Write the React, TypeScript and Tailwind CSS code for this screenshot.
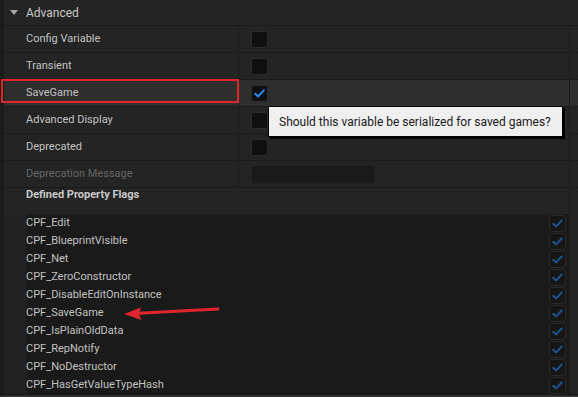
import React from "react";

const font = { fontFamily: "Roboto, 'Liberation Sans', sans-serif" };

const Check = ({ color }: { color: string }) => (
  <svg width="11" height="9" viewBox="0 0 11 9" fill="none">
    <path d="M1.2 4.8 L4.1 7.4 L9.8 1.4" stroke={color} strokeWidth="2" strokeLinecap="round" strokeLinejoin="round" />
  </svg>
);

const Box = ({ checked, dim }: { checked?: boolean; dim?: boolean }) => (
  <div className="w-[17px] h-[17px] rounded-[3px] bg-[#0f0f0f] border border-[#2c2c2c] flex items-center justify-center">
    {checked && <Check color={dim ? "#1f5a9e" : "#2a8cff"} />}
  </div>
);

const Row = ({
  label,
  children,
  highlight,
  muted,
}: {
  label: string;
  children?: React.ReactNode;
  highlight?: boolean;
  muted?: boolean;
}) => (
  <div className={`flex h-[27px] border-b border-[#1b1b1b] ${highlight ? "bg-[#2e2e2e]" : "bg-[#242424]"}`}>
    <div className="w-[4px] bg-[#1c1c1c]" />
    <div className={`w-[234px] pl-[22px] flex items-center text-[11px] ${muted ? "text-[#676767]" : "text-[#c2c2c2]"}`}>
      {label}
    </div>
    <div className="w-px bg-[#1b1b1b]" />
    <div className="flex-1 pl-[12px] flex items-center">{children}</div>
    <div className="w-px bg-[#1b1b1b]" />
    <div className="w-[8px]" />
  </div>
);

const flags = [
  "CPF_Edit",
  "CPF_BlueprintVisible",
  "CPF_Net",
  "CPF_ZeroConstructor",
  "CPF_DisableEditOnInstance",
  "CPF_SaveGame",
  "CPF_IsPlainOldData",
  "CPF_RepNotify",
  "CPF_NoDestructor",
  "CPF_HasGetValueTypeHash",
];

export default function App() {
  return (
    <div className="relative w-[578px] h-[397px] overflow-hidden bg-[#2f2f2f]" style={font}>
      {/* header */}
      <div className="flex h-[26px] bg-[#242424] border-b border-[#1b1b1b]">
        <div className="w-[4px] bg-[#1c1c1c]" />
        <div className="flex items-center pl-[6px] gap-[8px] text-[12px] text-[#c8c8c8]">
          <svg width="8" height="5" viewBox="0 0 8 5">
            <path d="M0 0 H8 L4 5 Z" fill="#a8a8a8" />
          </svg>
          Advanced
        </div>
      </div>

      <Row label="Config Variable"><Box /></Row>
      <Row label="Transient"><Box /></Row>
      <Row label="SaveGame" highlight><Box checked /></Row>
      <Row label="Advanced Display"><Box /></Row>
      <Row label="Deprecated"><Box /></Row>
      <Row label="Deprecation Message" muted>
        <div className="w-[124px] h-[19px] rounded-[3px] bg-[#1a1a1a] border border-[#222]" />
      </Row>

      {/* defined flags */}
      <div className="flex h-[26px] bg-[#242424]">
        <div className="w-[4px] bg-[#1c1c1c]" />
        <div className="flex-1 pl-[22px] leading-[13px] text-[11px] font-bold text-[#c8c8c8]">Defined Property Flags</div>
        <div className="w-px bg-[#1b1b1b]" />
        <div className="w-[8px]" />
      </div>

      <div className="flex border-b border-[#151515]">
        <div className="w-[4px] bg-[#1c1c1c]" />
        <div className="w-[22px] bg-[#222222]" />
        <div className="flex-1 bg-[#1a1a1a] flex flex-col">
          {flags.map((f) => (
            <div key={f} className="h-[18px] flex items-center justify-between pr-[3px]">
              <span className="text-[11px] text-[#c2c2c2]">{f}</span>
              <div className="w-[17px] h-[17px] rounded-[3px] bg-[#161616] border border-[#2a2a2a] flex items-center justify-center">
                <Check color="#1d5494" />
              </div>
            </div>
          ))}
        </div>
        <div className="w-px bg-[#1b1b1b]" />
        <div className="w-[8px] bg-[#242424]" />
      </div>

      {/* red highlight box */}
      <div className="absolute left-[1px] top-[79px] w-[238px] h-[24px] border-2 border-[#e0262c]" />

      {/* tooltip */}
      <div className="absolute left-[268px] top-[106px] w-[295px] h-[31px] bg-[#efefef] border border-black shadow-[2px_2px_0_#000] flex items-center pl-[10px] text-[12px] text-[#1a1a1a]">
        Should this variable be serialized for saved games?
      </div>

      {/* red arrow */}
      <svg className="absolute left-0 top-0" width="578" height="397">
        <line x1="218" y1="309" x2="134" y2="313.5" stroke="#e0262c" strokeWidth="3" strokeLinecap="round" />
        <path d="M124 314 L141 307.5 L139 314 L141.5 320 Z" fill="#e0262c" />
      </svg>
    </div>
  );
}
